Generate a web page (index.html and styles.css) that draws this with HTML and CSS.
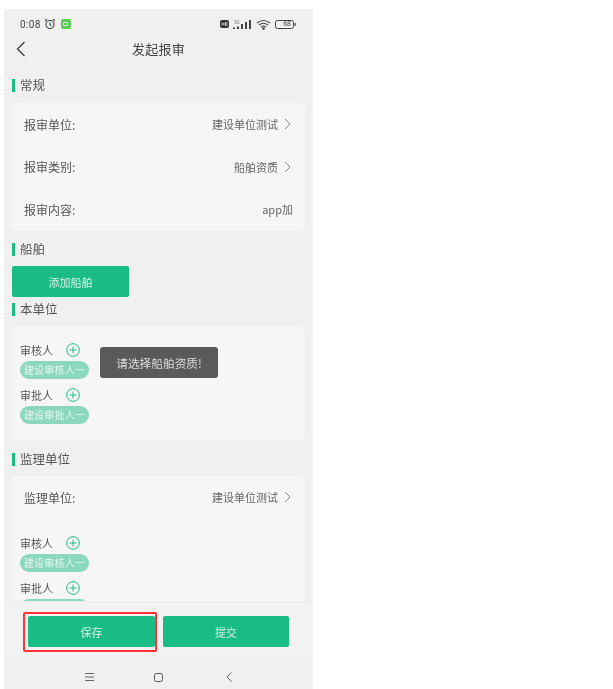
FILE: index.html
```html
<!DOCTYPE html>
<html lang="zh-CN">
<head>
  <meta charset="UTF-8">
  <meta name="viewport" content="width=device-width, initial-scale=1.0">
  <title>发起报审</title>
  <link rel="stylesheet" href="styles.css">
</head>
<body>
  <div class="phone">
    <!-- status bar -->
    <div class="status-bar">
      <div class="status-left">
        <span class="clock">0:08</span>
        <svg class="icon-alarm" width="12" height="12" viewBox="0 0 12 12" fill="none" stroke="#444" stroke-width="1.1">
          <circle cx="6" cy="6.5" r="4"/>
          <path d="M6 4.5V6.8L7.5 7.6M1 3L3 1.2M11 3L9 1.2"/>
        </svg>
        <span class="app-badge"><span class="app-face"></span></span>
      </div>
      <div class="status-right">
        <svg width="9" height="8" viewBox="0 0 9 8"><rect width="9" height="8" rx="2" fill="#333"/><path d="M2 2.5v3M4 2.5v3M2 4h2M5.5 2.5v3h1.5v-3z" stroke="#eee" stroke-width=".7" fill="none"/></svg>
        <svg width="19" height="11" viewBox="0 0 19 11" fill="#444"><rect x="0" y="8.5" width="2" height="1.5"/><rect x="4" y="7.5" width="2" height="2.5"/><rect x="8" y="5" width="2" height="5"/><rect x="12" y="3" width="2" height="7"/><rect x="16" y="1" width="2" height="9"/><text x="1" y="5" font-size="4.5" font-family="Roboto, sans-serif" fill="#777">5G</text></svg>
        <svg width="15" height="11" viewBox="0 0 15 11" fill="none" stroke="#444" stroke-width="1.1"><path d="M1 4Q7.5-1 14 4M3 6Q7.5 2.5 12 6M5 8Q7.5 6 10 8"/><circle cx="7.5" cy="9.5" r=".8" fill="#444"/></svg>
        <svg width="21" height="9" viewBox="0 0 21 9" fill="none"><rect x=".5" y=".5" width="18" height="8" rx="2" stroke="#444"/><rect x="19.5" y="3" width="1.2" height="3" fill="#444"/></svg>
        <span class="battery-num">68</span>
      </div>
    </div>

    <!-- title bar -->
    <div class="nav-bar">
      <svg class="back" width="10" height="16" viewBox="0 0 10 16" fill="none" stroke="#333" stroke-width="1.2"><path d="M8.5 1L1.5 8L8.5 15"/></svg>
      <span class="nav-title">发起报审</span>
    </div>

    <div class="content">
      <div class="section-title">常规</div>
      <div class="card">
        <div class="row">
          <span class="row-label">报审单位:</span>
          <span class="row-value">建设单位测试<svg class="chevron" width="7" height="12" viewBox="0 0 7 12" fill="none" stroke="#888" stroke-width="1"><path d="M1 1L6 6L1 11"/></svg></span>
        </div>
        <div class="row">
          <span class="row-label">报审类别:</span>
          <span class="row-value">船舶资质<svg class="chevron" width="7" height="12" viewBox="0 0 7 12" fill="none" stroke="#888" stroke-width="1"><path d="M1 1L6 6L1 11"/></svg></span>
        </div>
        <div class="row">
          <span class="row-label">报审内容:</span>
          <span class="row-value">app加</span>
        </div>
      </div>

      <div class="section-title ship-title">船舶</div>
      <button class="add-btn">添加船舶</button>

      <div class="section-title unit-title">本单位</div>
      <div class="card people-card">
        <div class="person-head">审核人
          <svg class="plus" width="14" height="14" viewBox="0 0 14 14" fill="none" stroke="#1abc85" stroke-width="1"><circle cx="7" cy="7" r="6.3"/><path d="M7 3.5V10.5M3.5 7H10.5"/></svg>
        </div>
        <span class="pill">建设审核人一</span>
        <div class="person-head">审批人
          <svg class="plus" width="14" height="14" viewBox="0 0 14 14" fill="none" stroke="#1abc85" stroke-width="1"><circle cx="7" cy="7" r="6.3"/><path d="M7 3.5V10.5M3.5 7H10.5"/></svg>
        </div>
        <span class="pill">建设审批人一</span>
      </div>

      <div class="section-title super-title">监理单位</div>
      <div class="card super-card">
        <div class="row">
          <span class="row-label">监理单位:</span>
          <span class="row-value">建设单位测试<svg class="chevron" width="7" height="12" viewBox="0 0 7 12" fill="none" stroke="#888" stroke-width="1"><path d="M1 1L6 6L1 11"/></svg></span>
        </div>
        <div class="people-block">
          <div class="person-head">审核人
            <svg class="plus" width="14" height="14" viewBox="0 0 14 14" fill="none" stroke="#1abc85" stroke-width="1"><circle cx="7" cy="7" r="6.3"/><path d="M7 3.5V10.5M3.5 7H10.5"/></svg>
          </div>
          <span class="pill">建设审核人一</span>
          <div class="person-head">审批人
            <svg class="plus" width="14" height="14" viewBox="0 0 14 14" fill="none" stroke="#1abc85" stroke-width="1"><circle cx="7" cy="7" r="6.3"/><path d="M7 3.5V10.5M3.5 7H10.5"/></svg>
          </div>
          <span class="pill">建设审批人一</span>
        </div>
      </div>
    </div>

    <!-- bottom buttons -->
    <div class="footer">
      <div class="save-mark"><button class="action-btn">保存</button></div>
      <button class="action-btn">提交</button>
    </div>

    <div class="sys-nav">
      <svg width="9" height="8" viewBox="0 0 9 8" stroke="#666" stroke-width="1"><path d="M0 .5H9M0 4H9M0 7.5H9"/></svg>
      <svg width="9" height="9" viewBox="0 0 9 9" fill="none" stroke="#555" stroke-width="1"><rect x=".5" y=".5" width="8" height="8" rx="2"/></svg>
      <svg class="sys-back" width="6" height="10" viewBox="0 0 6 10" fill="none" stroke="#666" stroke-width="1"><path d="M5.5 .5L1 5L5.5 9.5"/></svg>
    </div>

    <div class="toast">请选择船舶资质!</div>
  </div>
</body>
</html>
```

FILE: styles.css
```css
* {
  box-sizing: border-box;
}

body {
  margin: 0;
  background: #fff;
  font-family: "Noto Sans CJK SC", "Noto Sans", sans-serif;
  color: #444;
}

.phone {
  position: relative;
  width: 309px;
  height: 680px;
  margin: 9px 0 0 4px;
  background: #f0f0f0;
  display: flex;
  flex-direction: column;
  overflow: hidden;
  filter: blur(0.3px);
}

.status-bar {
  flex: none;
  height: 27px;
  padding: 3px 17px 0 16px;
  display: flex;
  justify-content: space-between;
  align-items: center;
}

.status-left,
.status-right {
  display: flex;
  align-items: center;
  gap: 3px;
}

.status-right {
  position: relative;
  gap: 4px;
}

.clock {
  font-family: "Roboto", sans-serif;
  font-size: 10px;
  letter-spacing: 0.4px;
  color: #444;
}

.app-badge {
  width: 10px;
  height: 10px;
  margin-left: 2px;
  padding: 3px 2.5px;
  border-radius: 2px;
  background: #63c95a;
}

.app-face {
  display: block;
  width: 5px;
  height: 4px;
  border: 1px solid #d8f3d4;
  border-radius: 1px;
}

.battery-num {
  position: absolute;
  right: 5px;
  top: 0;
  font-family: "Roboto", sans-serif;
  font-size: 7px;
  line-height: 11px;
  color: #444;
}

.nav-bar {
  flex: none;
  height: 26px;
  padding-bottom: 2px;
  display: flex;
  align-items: center;
  justify-content: center;
  position: relative;
}

.back {
  position: absolute;
  left: 12px;
  top: 5px;
}

.nav-title {
  font-size: 13px;
  letter-spacing: 0.3px;
  color: #444;
}

.content {
  flex: 1 1 0;
  min-height: 0;
  overflow: hidden;
  padding: 14px 8px 0;
}

.section-title {
  height: 18px;
  margin-bottom: 8px;
  padding-left: 8px;
  font-size: 12.5px;
  line-height: 18px;
  color: #555;
  position: relative;
}

.section-title::before {
  content: "";
  position: absolute;
  left: 0;
  top: 3px;
  width: 2.5px;
  height: 13px;
  background: #1abc85;
}

.content > .section-title:first-child {
  margin-bottom: 9px;
}

.ship-title {
  margin-top: 9.5px;
}

.unit-title {
  margin-top: 3px;
}

.super-title {
  margin-top: 10px;
}

.card {
  background: #f6f6f6;
  border-radius: 5px;
}

.row {
  height: 42.5px;
  padding: 0 12px;
  display: flex;
  justify-content: space-between;
  align-items: center;
}

.row-label {
  font-size: 12px;
  color: #555;
}

.row-value {
  display: flex;
  align-items: center;
  font-size: 11px;
  color: #666;
}

.chevron {
  margin-left: 6px;
  margin-right: 2px;
}

.add-btn {
  display: block;
  width: 117px;
  height: 31px;
  border: none;
  border-radius: 2px;
  background: #1abc85;
  color: #d9f2e8;
  font-family: inherit;
  font-size: 11px;
}

.people-card {
  height: 114px;
  padding: 15px 8px 0;
}

.super-card {
  height: 140px;
}

.people-block {
  padding: 15px 8px 0;
}

.person-head {
  height: 18px;
  display: flex;
  align-items: center;
  font-size: 11px;
  color: #555;
}

.plus {
  margin-left: 13px;
}

.pill {
  display: block;
  width: 69px;
  height: 18px;
  margin: 2px 0 7px;
  border-radius: 9px;
  background: #8cd8be;
  color: #e6f6f0;
  font-size: 10px;
  letter-spacing: 0.2px;
  line-height: 18px;
  text-align: center;
  white-space: nowrap;
}

.footer {
  flex: none;
  height: 59px;
  padding: 14px 24px 0;
  display: flex;
  gap: 8px;
  background: #f2f2f2;
  border-top: 1px solid #ebebeb;
  border-bottom: 1px solid #eee;
}

.action-btn {
  display: block;
  width: 127px;
  height: 31px;
  border: none;
  border-radius: 2px;
  background: #1abc85;
  color: #d9f2e8;
  font-family: inherit;
  font-size: 11px;
}

.save-mark {
  position: relative;
  width: 127px;
  height: 31px;
}

/* red marker drawn over the save button */
.save-mark::after {
  content: "";
  position: absolute;
  top: -4px;
  right: -2px;
  bottom: -5px;
  left: -5px;
  border: 2px solid #f33;
  border-radius: 2px;
}

.sys-nav {
  flex: none;
  height: 29px;
  padding: 5px 0 0 81px;
  display: flex;
  gap: 60px;
  align-items: center;
}

.sys-back {
  margin-left: 3px;
}

.toast {
  position: absolute;
  left: 96px;
  top: 338px;
  width: 118px;
  height: 31px;
  border-radius: 3px;
  background: #5a5a5a;
  color: #ddd;
  font-size: 11.7px;
  line-height: 31px;
  text-align: center;
}
```
